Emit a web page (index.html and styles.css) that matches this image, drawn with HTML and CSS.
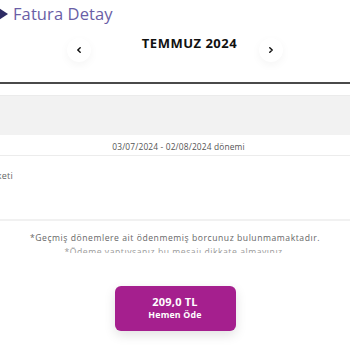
FILE: index.html
```html
<!DOCTYPE html>
<html lang="tr">
<head>
<meta charset="utf-8">
<link rel="stylesheet" href="styles.css">
</head>
<body>
<div class="page">
  <header class="header">
    <span class="tri"></span>
    <h1 class="title">Fatura Detay</h1>
  </header>
  <div class="month-row">
    <button class="nav-btn" aria-label="Önceki"><svg width="8" height="8" viewBox="0 0 8 8"><path d="M5.2 1.8 L2.8 4 L5.2 6.2" fill="none" stroke="#111" stroke-width="1.5" stroke-linecap="round" stroke-linejoin="round"/></svg></button>
    <div class="month"><span>TEMMUZ 2024</span></div>
    <button class="nav-btn" aria-label="Sonraki"><svg width="8" height="8" viewBox="0 0 8 8"><path d="M2.8 1.8 L5.2 4 L2.8 6.2" fill="none" stroke="#111" stroke-width="1.5" stroke-linecap="round" stroke-linejoin="round"/></svg></button>
  </div>
  <div class="rule"></div>
  <div class="band"></div>
  <div class="period">03/07/2024 - 02/08/2024 dönemi</div>
  <div class="package">Paketi</div>
  <div class="divider"></div>
  <div class="notes">
    <p class="note">*Geçmiş dönemlere ait ödenmemiş borcunuz bulunmamaktadır.</p>
    <p class="note faded">*Ödeme yaptıysanız bu mesajı dikkate almayınız.</p>
  </div>
  <div class="pay-wrap">
    <button class="pay">
      <span class="amount">209,0 TL</span>
      <span class="pay-label">Hemen Öde</span>
    </button>
  </div>
</div>
</body>
</html>
```
FILE: styles.css
```css
* { box-sizing: border-box; }
html, body { margin: 0; padding: 0; background: #fff; }
body { font-family: "Open Sans", "Noto Sans", sans-serif; overflow: hidden; width: 350px; height: 350px; }
.page { width: 350px; }
.header { display: flex; align-items: center; height: 28px; }
.tri { width: 0; height: 0; border-top: 6px solid transparent; border-bottom: 6px solid transparent; border-left: 9px solid #2d2b63; margin-left: -1px; margin-right: 5px; }
.title { margin: 0; font-size: 16.5px; font-weight: 400; color: #6a5ea6; letter-spacing: 0.1px; line-height: 28px; }
.month-row { display: flex; padding: 0 67px; height: 54px; }
.month { flex: 1; text-align: center; padding-left: 29px; padding-top: 3px; }
.month span { font-size: 13px; font-weight: 700; color: #111; letter-spacing: 0.5px; }
.nav-btn { width: 24px; height: 24px; border-radius: 50%; border: none; background: #fff; box-shadow: 0 3px 10px rgba(0,0,0,0.045); margin-top: 10px; padding: 0; display: flex; align-items: center; justify-content: center; }
.rule { height: 2px; background: #4a4a4a; }
.band { height: 40px; margin-top: 11px; background: #f2f2f2; border-top: 1px solid #ebebeb; }
.period { text-align: center; font-size: 8.4px; color: #555; padding-left: 7px; height: 21px; line-height: 24px; border-bottom: 1px solid #ececec; letter-spacing: 0.15px; }
.package { font-size: 9px; color: #666; margin-left: -14px; padding-top: 13px; height: 63px; letter-spacing: 0.2px; }
.divider { height: 2px; background: #f1f1f1; }
.notes { height: 32px; overflow: hidden; padding-top: 10px; }
.note { margin: 0; text-align: center; font-size: 8.6px; color: #666; line-height: 14px; letter-spacing: 0.55px; white-space: nowrap; }
.note.faded { color: #999; }
.pay-wrap { display: flex; justify-content: center; padding-top: 33px; }
.pay { width: 121px; height: 45px; border: none; border-radius: 6px; background: #a51f8e; color: #fff; display: flex; flex-direction: column; align-items: center; justify-content: center; box-shadow: 0 4px 12px rgba(0,0,0,0.12); font-family: "Open Sans", sans-serif; padding: 0 0 2px; }
.amount { font-size: 11px; font-weight: 700; line-height: 15px; letter-spacing: 0.2px; }
.pay-label { font-size: 8.8px; font-weight: 700; line-height: 12px; letter-spacing: 0.2px; }
```
